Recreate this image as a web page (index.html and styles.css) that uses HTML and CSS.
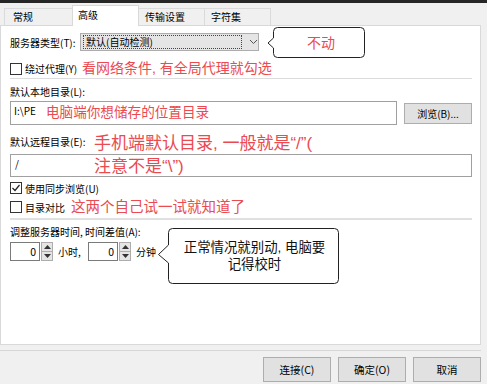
FILE: index.html
```html
<!DOCTYPE html>
<html lang="zh">
<head>
<meta charset="utf-8">
<link rel="stylesheet" href="styles.css">
</head>
<body>
<div class="topbar"></div>
<div class="tabs">
  <div class="tab first">常规</div>
  <div class="tab active">高级</div>
  <div class="tab">传输设置</div>
  <div class="tab">字符集</div>
</div>
<div class="panel">
  <div class="row r1">
    <span class="lbl-type">服务器类型(T):</span>
    <div class="combo">
      <span class="combo-val">默认(自动检测)</span>
      <span class="combo-btn"><svg width="9" height="6" viewBox="0 0 9 6"><polyline points="1,1 4.5,4.5 8,1" fill="none" stroke="#555" stroke-width="1"/></svg></span>
    </div>
  </div>
  <div class="row r2">
    <span class="cb"></span><span class="cb-text">绕过代理(Y)</span>
    <span class="note note-proxy">看网络条件, 有全局代理就勾选</span>
  </div>
  <div class="sep"></div>
  <div class="row lbl-row">默认本地目录(L):</div>
  <div class="row dir-row">
    <div class="input local">I:\PE<span class="note note-local">电脑端你想储存的位置目录</span></div>
    <div class="btn browse">浏览(B)...</div>
  </div>
  <div class="row lbl-row remote-lbl">默认远程目录(E):</div>
  <div class="input remote">/</div>
  <div class="row cb-row c1">
    <span class="cb checked"><svg width="10" height="10" viewBox="0 0 10 10"><polyline points="1.5,5 4,7.5 8.5,2" fill="none" stroke="#222" stroke-width="1.2"/></svg></span><span class="cb-text">使用同步浏览(U)</span>
  </div>
  <div class="row cb-row c2">
    <span class="cb"></span><span class="cb-text">目录对比</span>
    <span class="note note-try">这两个自己试一试就知道了</span>
  </div>
  <div class="sep thick"></div>
  <div class="row time-lbl">调整服务器时间, 时间差值(A):</div>
  <div class="row spin-row">
    <div class="num">0</div>
    <div class="spin">
      <span class="half"><svg width="7" height="4" viewBox="0 0 7 4"><polygon points="0,4 3.5,0 7,4" fill="#333"/></svg></span>
      <span class="half"><svg width="7" height="4" viewBox="0 0 7 4"><polygon points="0,0 3.5,4 7,0" fill="#333"/></svg></span>
    </div>
    <span class="unit u1">小时,</span>
    <div class="num">0</div>
    <div class="spin">
      <span class="half"><svg width="7" height="4" viewBox="0 0 7 4"><polygon points="0,4 3.5,0 7,4" fill="#333"/></svg></span>
      <span class="half"><svg width="7" height="4" viewBox="0 0 7 4"><polygon points="0,0 3.5,4 7,0" fill="#333"/></svg></span>
    </div>
    <span class="unit u2">分钟</span>
  </div>

  <div class="note note-remote"><span class="nl">手机端默认目录, 一般就是“/”(</span><span class="nl">注意不是“\”)</span></div>

  <div class="bubble b1">
    <svg class="bubble-shape" width="100" height="33" viewBox="0 0 100 33">
      <path d="M10.5,0.5 H93.5 Q97.5,0.5 97.5,4.5 V26.5 Q97.5,30.5 93.5,30.5 H10.5 Q6.5,30.5 6.5,26.5 V21 L1,16 L6.5,11 V4.5 Q6.5,0.5 10.5,0.5 Z" fill="#fff" stroke="#222" stroke-width="1"/>
    </svg>
    <span class="bubble-text red">不动</span>
  </div>

  <div class="bubble b2">
    <svg class="bubble-shape" width="184" height="57" viewBox="0 0 184 57">
      <path d="M15.5,0.5 H177.5 Q181.5,0.5 181.5,4.5 V51.5 Q181.5,55.5 177.5,55.5 H15.5 Q11.5,55.5 11.5,51.5 V35 L1.5,26.5 L11.5,17 V4.5 Q11.5,0.5 15.5,0.5 Z" fill="#fff" stroke="#222" stroke-width="1"/>
    </svg>
    <span class="bubble-text dark"><span class="bl">正常情况就别动, 电脑要</span><span class="bl">记得校时</span></span>
  </div>
</div>
<div class="footer-sep"></div>
<div class="buttons">
  <div class="btn big">连接(C)</div>
  <div class="btn big">确定(O)</div>
  <div class="btn big">取消</div>
</div>
</body>
</html>
```

FILE: styles.css
```css
html, body {
  margin: 0;
  padding: 0;
}
body {
  width: 487px;
  height: 384px;
  overflow: hidden;
  background: #f0f0f0;
  font-family: "Noto Sans CJK SC", "Noto Sans", sans-serif;
  font-size: 10px;
  color: #000;
}
.topbar {
  height: 3px;
  background: #262626;
}
.tabs {
  display: flex;
  align-items: flex-end;
  height: 22px;
  padding-left: 4px;
}
.tab {
  box-sizing: border-box;
  width: 67px;
  height: 17px;
  line-height: 16px;
  padding-left: 6px;
  border: 1px solid #dadada;
  border-bottom: none;
  margin-right: -1px;
  background: #f0f0f0;
}
.tab.first {
  width: 69px;
  padding-left: 8px;
}
.tab.active {
  height: 21px;
  line-height: 18px;
  padding-left: 5px;
  background: #fff;
  position: relative;
  z-index: 1;
  margin-bottom: -1px;
  border-color: #d9d9d9;
}
.panel {
  position: relative;
  box-sizing: border-box;
  width: 481px;
  height: 320px;
  background: #fff;
  border: 1px solid #d9d9d9;
  padding: 0 8px 0 9px;
}
.row {
  display: flex;
  align-items: center;
}
.r1 {
  margin-top: 7px;
  height: 18px;
}
.lbl-type {
  width: 70px;
}
.combo {
  box-sizing: border-box;
  width: 179px;
  height: 18px;
  border: 1px solid #adadad;
  background: #e5e5e5;
  display: flex;
  align-items: center;
  padding-left: 2px;
}
.combo-val {
  box-sizing: border-box;
  width: 161px;
  height: 14px;
  line-height: 12px;
  border: 1px dotted #444;
  padding-left: 2px;
}
.combo-btn {
  display: flex;
  align-items: center;
  margin-left: 7px;
}
.r2 {
  margin-top: 9px;
  height: 17px;
}
.cb {
  box-sizing: border-box;
  width: 12px;
  height: 12px;
  border: 1px solid #333;
  background: #fff;
  display: flex;
  align-items: center;
  justify-content: center;
}
.cb-text {
  margin-left: 3px;
}
.note {
  color: #ea4a50;
  white-space: nowrap;
  font-family: "Liberation Sans", "Noto Sans CJK SC", sans-serif;
}
.note-proxy {
  font-size: 14px;
  margin-left: 5px;
  line-height: 17px;
}
.sep {
  margin-top: 1px;
  height: 1px;
  background: #dcdcdc;
}
.sep.thick {
  margin-top: 4px;
  height: 2px;
  background: #e0e0e0;
}
.lbl-row {
  margin-top: 5px;
  height: 14px;
}
.dir-row {
  margin-top: 3px;
  height: 24px;
  align-items: flex-start;
}
.input {
  box-sizing: border-box;
  border: 1px solid #a0a0a0;
  background: #fff;
  padding-left: 3px;
}
.input.local {
  position: relative;
  width: 387px;
  height: 24px;
  line-height: 16px;
  padding-top: 1px;
}
.note-local {
  position: absolute;
  left: 35px;
  top: 2px;
  font-size: 13.6px;
  line-height: 18px;
}
.btn {
  box-sizing: border-box;
  background: #e1e1e1;
  border: 1px solid #adadad;
  display: flex;
  align-items: center;
  justify-content: center;
}
.browse {
  margin-left: 7px;
  margin-top: 2px;
  width: 68px;
  height: 21px;
}
.remote-lbl {
  margin-top: 9px;
}
.input.remote {
  margin-top: 6px;
  height: 23px;
  line-height: 17px;
  padding-left: 4px;
}
.note-remote {
  position: absolute;
  left: 93px;
  top: 106px;
  font-size: 17px;
  line-height: 23px;
}
.nl, .bl {
  display: block;
}
.cb-row {
  height: 14px;
}
.c1 {
  margin-top: 4px;
}
.c2 {
  margin-top: 5px;
}
.note-try {
  font-size: 14.5px;
  margin-left: 6px;
  line-height: 17px;
}
.time-lbl {
  margin-top: 4px;
  height: 14px;
}
.spin-row {
  margin-top: 4px;
  height: 19px;
}
.num {
  box-sizing: border-box;
  width: 30px;
  height: 19px;
  border: 1px solid #7a7a7a;
  text-align: right;
  padding-right: 3px;
  line-height: 17px;
  font-size: 10.5px;
}
.spin {
  box-sizing: border-box;
  margin-left: 1px;
  width: 12px;
  height: 19px;
  border: 1px solid #adadad;
  background: #e5e5e5;
  display: flex;
  flex-direction: column;
}
.half {
  flex: 1;
  display: flex;
  align-items: center;
  justify-content: center;
}
.half + .half {
  border-top: 1px solid #adadad;
}
.unit.u1 {
  margin-left: 5px;
  width: 30px;
}
.unit.u2 {
  margin-left: 5px;
}
.bubble {
  position: absolute;
  display: flex;
  align-items: center;
  justify-content: center;
}
.bubble-shape {
  position: absolute;
  left: 0;
  top: 0;
}
.bubble-text {
  position: relative;
  text-align: center;
  font-family: "Liberation Sans", "Noto Sans CJK SC", sans-serif;
}
.b1 {
  left: 266px;
  top: 1px;
  width: 100px;
  height: 31px;
}
.b1 .bubble-text {
  padding-left: 8px;
  font-size: 14px;
  line-height: 18px;
}
.red {
  color: #ea4a50;
}
.b2 {
  left: 156px;
  top: 202px;
  width: 184px;
  height: 56px;
}
.b2 .bubble-text {
  padding-left: 11px;
  font-size: 13.4px;
  line-height: 17px;
  color: #111;
}
.footer-sep {
  margin-top: 5px;
  height: 1px;
  background: #d6d6d6;
  width: 481px;
}
.buttons {
  display: flex;
  justify-content: flex-end;
  gap: 7px;
  width: 481px;
  margin-top: 6px;
}
.btn.big {
  width: 68px;
  height: 25px;
  font-size: 10.5px;
}
```
